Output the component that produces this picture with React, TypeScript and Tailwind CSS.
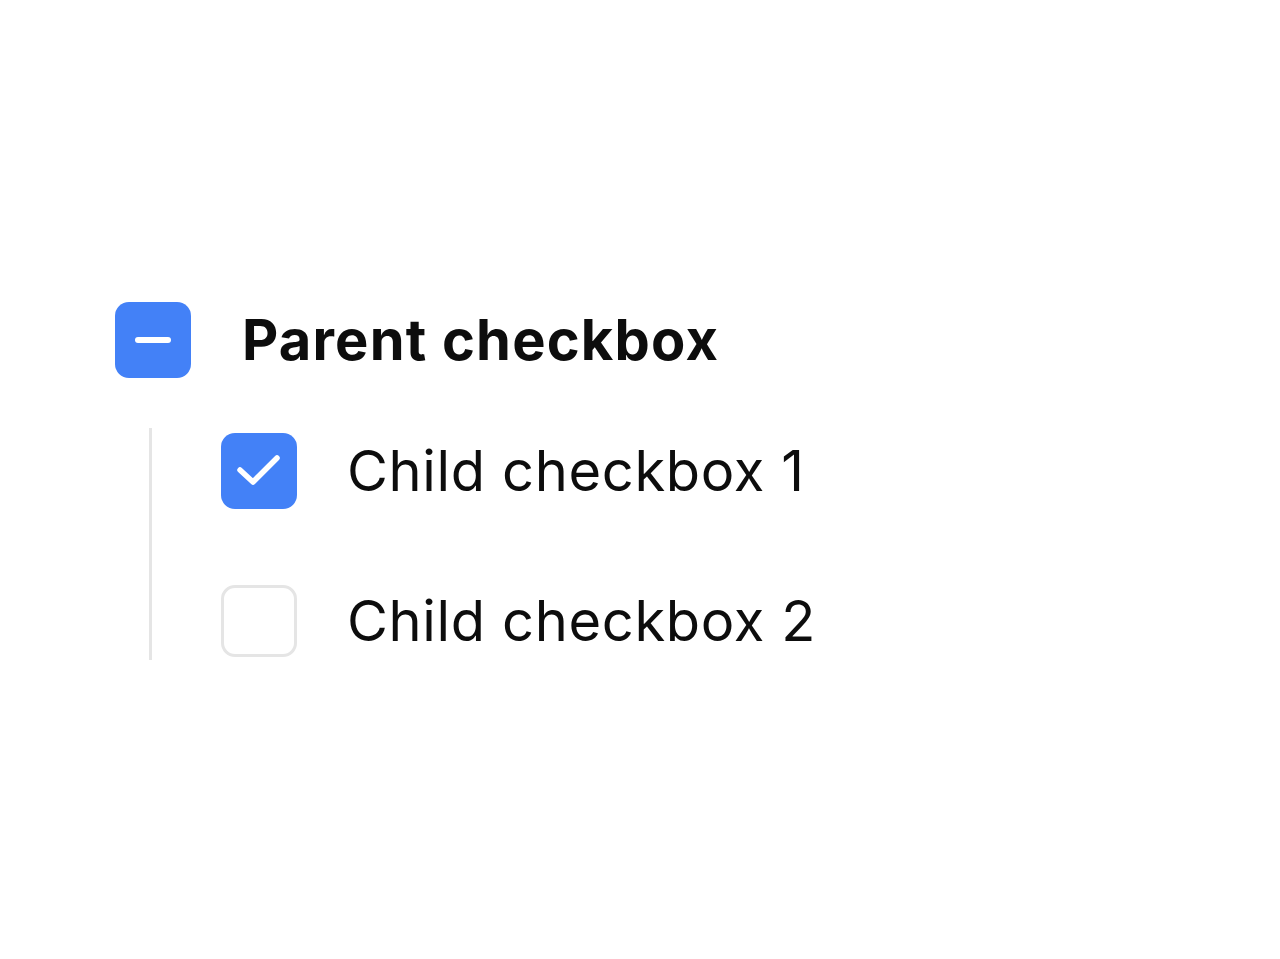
import React from "react";

function Box({ state }: { state: "mixed" | "checked" | "empty" }) {
  if (state === "empty") {
    return <div className="w-[76px] h-[72px] shrink-0 rounded-[14px] border-[3px] border-[#e5e5e5] bg-white" />;
  }
  return (
    <div className="w-[76px] h-[76px] shrink-0 rounded-[14px] bg-[#4381f7] flex items-center justify-center">
      {state === "mixed" ? (
        <div className="w-[36px] h-[6px] rounded-full bg-white" />
      ) : (
        <svg width="76" height="76" viewBox="0 0 76 76" fill="none">
          <path d="M19 37 L32 49 L56 25" stroke="white" strokeWidth="5.5" strokeLinecap="round" strokeLinejoin="round" />
        </svg>
      )}
    </div>
  );
}

export default function App() {
  const font = { fontFamily: "Inter, 'Noto Sans', sans-serif" };
  return (
    <div className="min-h-[959px] w-full bg-white pt-[302px] pl-[115px] text-[#0d0d0d]" style={font}>
      <div className="flex items-center">
        <Box state="mixed" />
        <span className="ml-[51px] text-[56px] font-bold leading-none tracking-[1.2px]">Parent checkbox</span>
      </div>
      <div className="mt-[50px] ml-[34px] w-fit border-l-[3px] border-[#e5e5e5] pl-[69px] pt-[5px] pb-[3px] flex flex-col gap-[76px]">
        <div className="flex items-center">
          <Box state="checked" />
          <span className="ml-[50px] text-[56px] leading-none tracking-[0.65px]">Child checkbox 1</span>
        </div>
        <div className="flex items-center">
          <Box state="empty" />
          <span className="ml-[50px] text-[56px] leading-none tracking-[0.65px]">Child checkbox 2</span>
        </div>
      </div>
    </div>
  );
}
